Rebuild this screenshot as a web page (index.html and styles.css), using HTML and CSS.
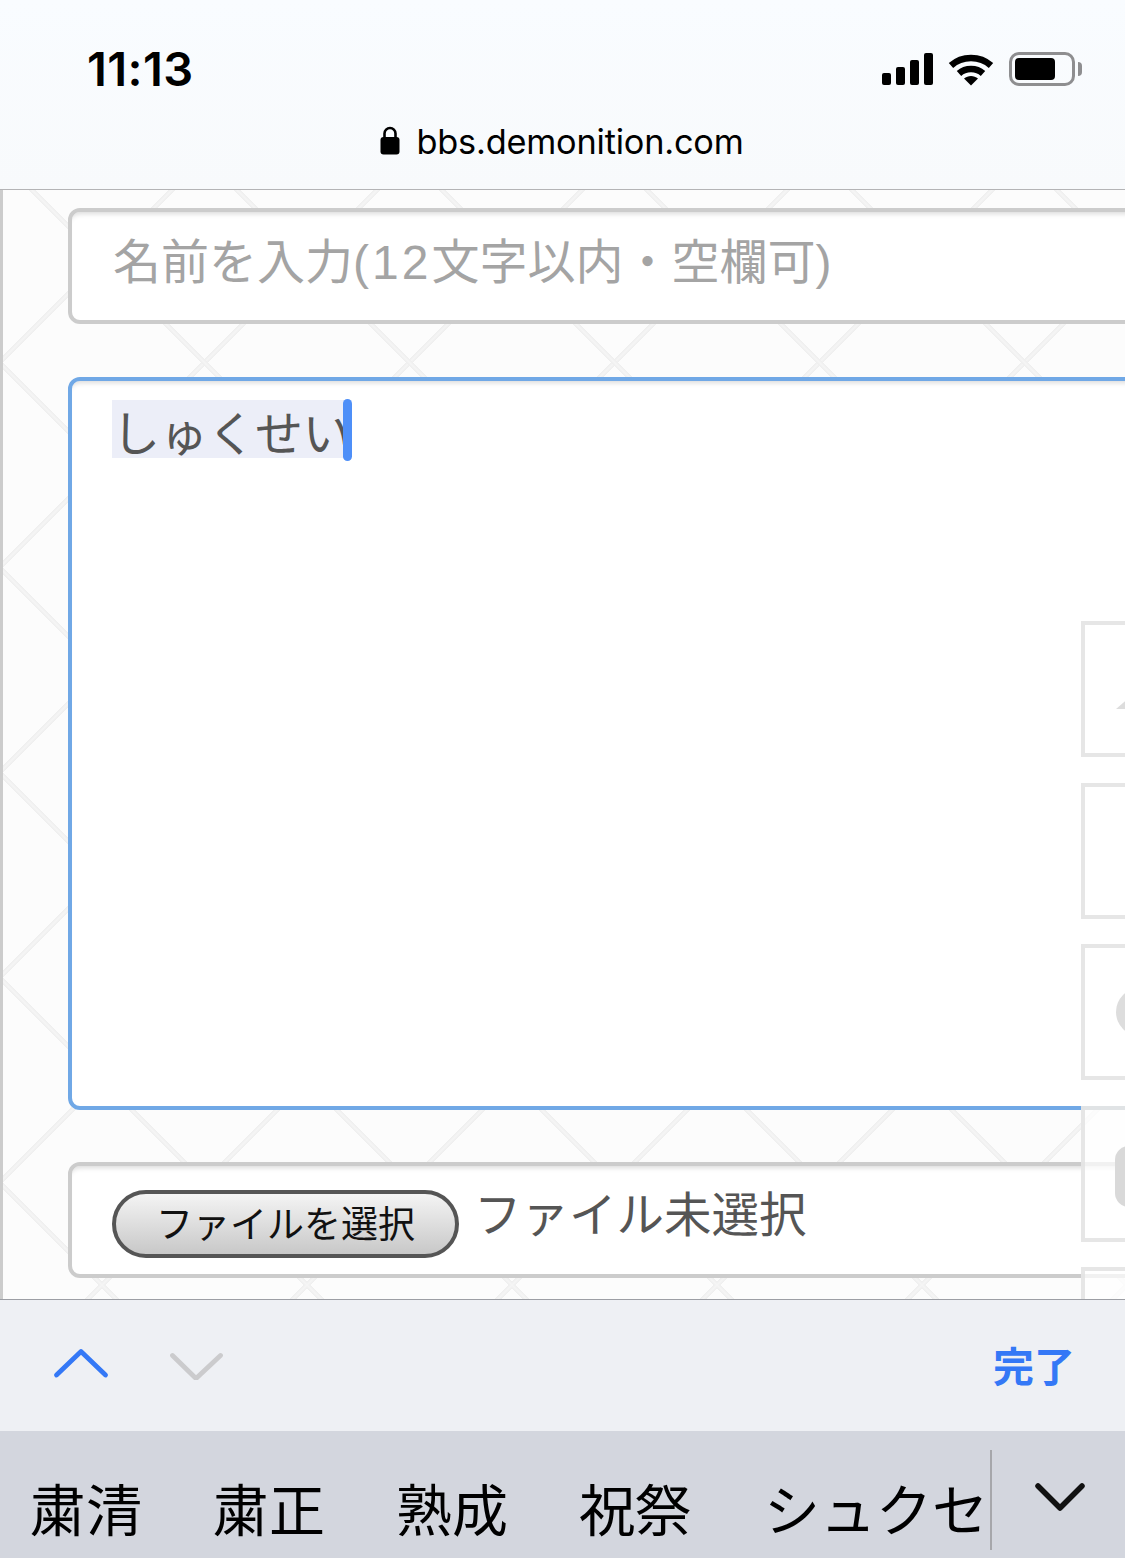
FILE: index.html
```html
<!DOCTYPE html>
<html lang="ja">
<head>
  <meta charset="UTF-8">
  <meta name="viewport" content="width=device-width, initial-scale=1.0">
  <title>bbs.demonition.com</title>
  <link rel="stylesheet" href="styles.css">
</head>
<body>
  <div class="phone">
    <!-- Status bar and address -->
    <header class="top-bar">
      <div class="status-row">
        <span class="time">11:13</span>
        <div class="status-icons">
          <div class="signal">
            <span class="bar bar-1"></span>
            <span class="bar bar-2"></span>
            <span class="bar bar-3"></span>
            <span class="bar bar-4"></span>
          </div>
          <svg class="wifi" width="46" height="34" viewBox="0 0 46 34">
            <path d="M3 13.5C14 3.5 32 3.5 43 13.5" fill="none" stroke="#000" stroke-width="6.5"/>
            <path d="M11 21.5C17.5 15.5 28.5 15.5 35 21.5" fill="none" stroke="#000" stroke-width="6.5"/>
            <path d="M16 26.5C20 23 26 23 30 26.5L23 33.5Z" fill="#000"/>
          </svg>
          <div class="battery"><span class="battery-level"></span></div>
          <span class="battery-cap"></span>
        </div>
      </div>
      <div class="url-row">
        <svg class="lock" width="20" height="29" viewBox="0 0 20 29">
          <path d="M4.5 12V7.5a5.5 5.5 0 0 1 11 0V12" fill="none" stroke="#000" stroke-width="2.6"/>
          <rect x="0.5" y="11" width="19" height="17.5" rx="3" fill="#000"/>
        </svg>
        <span class="url">bbs.demonition.com</span>
      </div>
    </header>

    <!-- Form -->
    <main class="content">
      <div class="field name-field">名前を入力<span class="latin">(12</span>文字以内・空欄可)</div>
      <div class="field body-field">
        <span class="composing">しゅくせい<span class="caret"></span></span>
      </div>
      <div class="field file-field">
        <button class="file-btn">ファイルを選択</button>
        <span class="file-label">ファイル未選択</span>
      </div>

      <!-- Side buttons over the form -->
      <div class="side-boxes">
        <div class="side-box"><span class="side-triangle"></span></div>
        <div class="side-box"></div>
        <div class="side-box"><span class="side-circle"></span></div>
        <div class="side-box"><span class="side-rect"></span></div>
        <div class="side-box"></div>
      </div>
    </main>

    <!-- Keyboard accessory -->
    <div class="toolbar">
      <div class="arrows">
        <svg width="58" height="32" viewBox="0 0 58 32">
          <path d="M4.5 27L29 3.5L53.5 27" fill="none" stroke="#3478f6" stroke-width="4.8" stroke-linecap="round" stroke-linejoin="round"/>
        </svg>
        <svg width="58" height="32" viewBox="0 0 58 32">
          <path d="M5.5 7.5L29 30.5L53.5 7.5" fill="none" stroke="#cbcbcd" stroke-width="4.8" stroke-linecap="round" stroke-linejoin="round"/>
        </svg>
      </div>
      <span class="done">完了</span>
    </div>

    <!-- Conversion candidates -->
    <div class="candidates">
      <div class="candidate-list">
        <span class="candidate">粛清</span>
        <span class="candidate">粛正</span>
        <span class="candidate">熟成</span>
        <span class="candidate">祝祭</span>
        <span class="candidate candidate-kana">シュクセイ</span>
      </div>
      <div class="candidate-more">
        <svg width="50" height="30" viewBox="0 0 50 30">
          <path d="M3 4L25 26L47 4" fill="none" stroke="#111" stroke-width="5.5" stroke-linecap="round" stroke-linejoin="round"/>
        </svg>
      </div>
    </div>
  </div>
</body>
</html>
```

FILE: styles.css
```css
body {
  margin: 0;
  background: #fff;
  font-family: "Noto Sans CJK JP", "Noto Sans", sans-serif;
}
.phone {
  width: 1125px;
  height: 1558px;
  display: flex;
  flex-direction: column;
  overflow: hidden;
}

/* Status bar */
.top-bar {
  flex: 0 0 190px;
  box-sizing: border-box;
  background: linear-gradient(#f9fcff, #f8fafc);
  border-bottom: 1px solid #b4b4b6;
  font-family: Inter, "Liberation Sans", sans-serif;
  color: #000;
}
.status-row {
  height: 114px;
  padding: 0 43px 0 87px;
  display: flex;
  align-items: center;
  justify-content: space-between;
}
.time {
  font-size: 47px;
  font-weight: 600;
  letter-spacing: 0.4px;
  margin-top: 22px;
}
.status-icons {
  display: flex;
  align-items: center;
  margin-top: 24px;
}
.signal {
  display: flex;
  align-items: flex-end;
  gap: 5px;
  height: 32px;
  margin-right: 15px;
}
.bar {
  width: 9px;
  background: #000;
  border-radius: 2px;
}
.bar-1 { height: 12px; }
.bar-2 { height: 18px; }
.bar-3 { height: 25px; }
.bar-4 { height: 32px; }
.wifi {
  margin-right: 15px;
}
.battery {
  box-sizing: border-box;
  width: 66px;
  height: 34px;
  padding: 3px;
  border: 3px solid #8e8e90;
  border-radius: 10px;
}
.battery-level {
  display: block;
  width: 40px;
  height: 22px;
  background: #000;
  border-radius: 4px;
}
.battery-cap {
  width: 4px;
  height: 14px;
  margin-left: 3px;
  background: #8e8e90;
  border-radius: 0 4px 4px 0;
}
.url-row {
  display: flex;
  align-items: center;
  justify-content: center;
  gap: 17px;
  height: 56px;
  margin-left: -2px;
}
.lock {
  margin-top: -3px;
}
.url {
  font-size: 34.3px;
  letter-spacing: -0.2px;
  margin-top: -2px;
}

/* Form area */
.content {
  flex: 0 0 1109px;
  box-sizing: border-box;
  position: relative;
  overflow: hidden;
  padding: 18px 0 0 65px;
  border-left: 3px solid #ccc;
  background-color: #fcfcfc;
  background-image:
    linear-gradient(45deg, transparent calc(50% - 2.5px), #eeeeee calc(50% - 2.5px), #f5f5f5 50%, #eeeeee calc(50% + 2.5px), transparent calc(50% + 2.5px)),
    linear-gradient(-45deg, transparent calc(50% - 2.5px), #eeeeee calc(50% - 2.5px), #f5f5f5 50%, #eeeeee calc(50% + 2.5px), transparent calc(50% + 2.5px));
  background-size: 205px 205px;
  background-position: 99px 70px;
}
.field {
  box-sizing: border-box;
  width: 1200px;
  height: 116px;
  margin-bottom: 53px;
  padding: 0 40px;
  background: #fff;
  border: 4px solid #ccc;
  border-radius: 12px;
  box-shadow: inset 0 6px 5px -4px rgba(0,0,0,0.14);
}
.name-field {
  font-family: "Liberation Sans", "Noto Sans CJK JP", sans-serif;
  font-size: 48px;
  line-height: 102px;
  padding-left: 41px;
  color: #a4a4a4;
}
.latin {
  letter-spacing: 3px;
}
.body-field {
  position: relative;
  height: 733px;
  margin-bottom: 52px;
  padding-top: 19px;
  border-color: #70a8e6;
}
.composing {
  position: relative;
  display: block;
  width: 232px;
  height: 58px;
  font-size: 48px;
  line-height: 60px;
  letter-spacing: -0.3px;
  color: #555;
  white-space: nowrap;
  background: #eceef8;
}
.caret {
  position: absolute;
  top: -1px;
  left: 231px;
  width: 9px;
  height: 62px;
  background: #4e8ff8;
  border-radius: 5px;
}
.file-field {
  display: flex;
  align-items: flex-start;
  gap: 15px;
  margin-bottom: 0;
}
.file-btn {
  box-sizing: border-box;
  flex: none;
  width: 347px;
  height: 68px;
  margin-top: 24px;
  padding: 0 0 5px;
  border: 4px solid #555;
  border-radius: 34px;
  background: linear-gradient(#f4f4f4, #c8c8c8);
  font-family: "Noto Sans CJK JP", sans-serif;
  font-size: 37px;
  color: #111;
}
.file-label {
  font-size: 47.5px;
  line-height: 92px;
  color: #555;
}

/* Translucent side buttons */
.side-boxes {
  position: absolute;
  top: 431px;
  left: 1078px;
  display: flex;
  flex-direction: column;
  gap: 25.5px;
}
.side-box {
  position: relative;
  box-sizing: border-box;
  width: 120px;
  height: 136px;
  background: rgba(255,255,255,0.72);
  border: 4px solid rgba(226,226,226,0.85);
}
.side-triangle {
  position: absolute;
  top: 70px;
  left: 31px;
  border-left: 16px solid transparent;
  border-right: 16px solid transparent;
  border-bottom: 14px solid #ddd;
}
.side-circle {
  position: absolute;
  top: 40px;
  left: 31px;
  width: 48px;
  height: 48px;
  background: #ddd;
  border-radius: 50%;
}
.side-rect {
  position: absolute;
  top: 36px;
  left: 30px;
  width: 60px;
  height: 61px;
  background: #d9d9d9;
  border-radius: 14px;
}

/* Keyboard accessory */
.toolbar {
  flex: 0 0 132px;
  box-sizing: border-box;
  padding: 0 50px 0 52px;
  display: flex;
  align-items: center;
  justify-content: space-between;
  background: #eef0f4;
  border-top: 1px solid #9c9ea4;
}
.arrows {
  display: flex;
  gap: 57px;
  margin-top: -3px;
}
.done {
  font-size: 41px;
  font-weight: 700;
  color: #3478f6;
  margin-top: -4px;
}

/* Candidates */
.candidates {
  flex: 0 0 127px;
  display: flex;
  background: #d3d6de;
}
.candidate-list {
  box-sizing: border-box;
  width: 990px;
  padding-left: 30px;
  display: flex;
  gap: 71px;
  overflow: hidden;
  font-size: 56px;
  line-height: 152px;
  color: #000;
  white-space: nowrap;
}
.candidate-kana {
  margin-left: 2px;
}
.candidate-more {
  box-sizing: border-box;
  flex: none;
  height: 100px;
  width: 135px;
  margin-top: 19px;
  padding: 32px 0 0 43px;
  border-left: 2px solid #a6a7ab;
}
```
